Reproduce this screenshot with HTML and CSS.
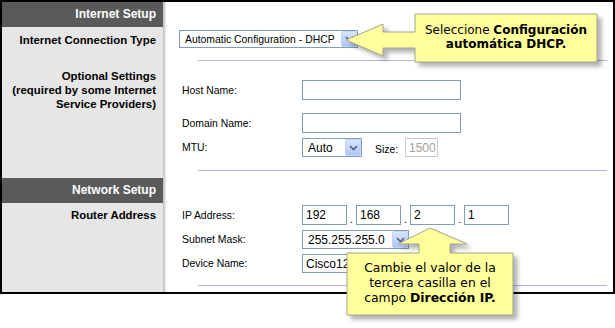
FILE: index.html
```html
<!DOCTYPE html>
<html>
<head>
<meta charset="utf-8">
<link rel="stylesheet" href="styles.css">
</head>
<body>
<div class="page">
  <div class="frame">
    <div class="side head">Internet Setup</div>
    <div class="main"></div>

    <div class="side lbl r1">Internet Connection Type</div>
    <div class="main r1">
      <div class="select sel-type"><span class="sel-text">Automatic Configuration - DHCP</span><span class="sel-btn"><svg viewBox="0 0 9 6" width="9" height="6"><path d="M1 1 L4.5 4.5 L8 1" fill="none" stroke="#4d6185" stroke-width="1.6"/></svg></span></div>
      <div class="rule rule1"></div>
    </div>

    <div class="side lbl r2">Optional Settings<br>(required by some Internet<br>Service Providers)</div>
    <div class="main r2">
      <div class="field f-host"><span class="flabel">Host Name:</span><span class="input w-long"></span></div>
      <div class="field f-domain"><span class="flabel">Domain Name:</span><span class="input w-long"></span></div>
      <div class="field f-mtu"><span class="flabel">MTU:</span>
        <div class="select sel-mtu"><span class="sel-text">Auto</span><span class="sel-btn"><svg viewBox="0 0 9 6" width="9" height="6"><path d="M1 1 L4.5 4.5 L8 1" fill="none" stroke="#4d6185" stroke-width="1.6"/></svg></span></div>
        <span class="size-lbl">Size:</span><span class="input w-size disabled">1500</span>
      </div>
      <div class="rule rule2"></div>
    </div>

    <div class="side head">Network Setup</div>
    <div class="main"></div>

    <div class="side lbl r3">Router Address</div>
    <div class="main r3">
      <div class="field f-ip"><span class="flabel">IP Address:</span>
        <span class="input w-oct">192</span><span class="dot">.</span><span class="input w-oct">168</span><span class="dot">.</span><span class="input w-oct">2</span><span class="dot">.</span><span class="input w-oct">1</span>
      </div>
      <div class="field f-mask"><span class="flabel">Subnet Mask:</span>
        <div class="select sel-mask"><span class="sel-text">255.255.255.0</span><span class="sel-btn"><svg viewBox="0 0 9 6" width="9" height="6"><path d="M1 1 L4.5 4.5 L8 1" fill="none" stroke="#4d6185" stroke-width="1.6"/></svg></span></div>
      </div>
      <div class="field f-dev"><span class="flabel">Device Name:</span><span class="input w-long">Cisco12345</span></div>
      <div class="rule rule3"></div>
    </div>
  </div>

  <div class="callout c1">
    <svg class="bubble" viewBox="340 8 270 62" width="270" height="62">
      <path d="M346 40 L383 24 L383 32 L415 32 L415 14 L597 14 L597 62 L415 62 L415 48 L383 48 L383 56 Z" fill="#ffff9c" stroke="#a4a48c" stroke-width="1"/>
    </svg>
    <div class="ctext t1">Seleccione <b>Configuración</b><br><b>automática DHCP.</b></div>
  </div>

  <div class="callout c2">
    <svg class="bubble" viewBox="340 222 180 100" width="180" height="100">
      <path d="M430 228 L467 244 L450 244 L450 253 L513 253 L513 315 L347 315 L347 253 L419 253 L419 244 L398 244 Z" fill="#ffff9c" stroke="#a4a48c" stroke-width="1"/>
    </svg>
    <div class="ctext t2">Cambie el valor de la<br>tercera casilla en el<br>campo <b>Dirección IP.</b></div>
  </div>
</div>
</body>
</html>
```
FILE: styles.css
```css
html, body {
  margin: 0;
  padding: 0;
  background: #fff;
}
.page {
  position: relative;
  width: 615px;
  height: 328px;
}
.frame {
  box-sizing: border-box;
  width: 615px;
  height: 294px;
  border: 2px solid #000;
  display: grid;
  grid-template-columns: 161px 1fr;
  grid-template-rows: 25px 39px 112px 25px 1fr;
  font-family: "Liberation Sans", Arial, sans-serif;
  color: #000;
}
.side {
  background: #e6e6e6;
  text-align: right;
  padding-right: 7px;
}
.side.head {
  background: #5a5a5a;
  color: #fff;
  font-weight: bold;
  font-size: 12px;
  line-height: 25px;
}
.lbl {
  font-weight: bold;
  font-size: 11.4px;
  line-height: 14px;
}
.side.r1 { padding-top: 6px; }
.side.r2 { padding-top: 3px; }
.side.r3 { padding-top: 5px; }
.main {
  background: linear-gradient(90deg, #bdbdbd 0, #dcdcdc 2px, #f4f4f4 3px, #fff 4px);
  display: flex;
  flex-direction: column;
  padding-left: 19px;
  font-size: 10.4px;
}
.main.r1 { padding-top: 3px; }
.main.r2 { padding-top: 14px; }
.main.r3 { padding-top: 2px; }
.rule {
  height: 1px;
  background: #b4b4e4;
  margin-left: 16px;
  margin-right: 6px;
}
.rule1 { margin-top: 12px; }
.rule2 { margin-top: 13px; }
.rule3 { margin-top: 12px; }

.field {
  display: flex;
  align-items: center;
  height: 20px;
}
.f-domain { margin-top: 13px; }
.f-mtu { margin-top: 5px; height: 19px; }
.f-mask { margin-top: 5px; height: 19px; }
.f-dev { margin-top: 5px; height: 19px; }
.flabel {
  width: 120px;
  flex: none;
}
.input {
  box-sizing: border-box;
  height: 100%;
  border: 1px solid #7f9db9;
  background: #fff;
  font-size: 12px;
  padding-left: 3px;
  display: flex;
  align-items: center;
  overflow: hidden;
  white-space: nowrap;
}
.w-long { width: 159px; }
.w-size { width: 33px; }
.w-oct { width: 45px; }
.disabled { color: #a0a0a0; border-color: #c9c9c9; }
.dot {
  width: 9px;
  text-align: center;
  align-self: flex-end;
  font-size: 11px;
  line-height: 12px;
}
.size-lbl {
  margin-left: 13px;
  width: 30px;
  padding-top: 4px;
}
.select {
  box-sizing: border-box;
  border: 1px solid #7f9db9;
  background: #fff;
  display: flex;
  align-items: center;
  justify-content: space-between;
  height: 19px;
  font-size: 10.4px;
}
.sel-type { width: 179px; height: 18px; }
.sel-mtu { width: 60px; }
.sel-mask { width: 107px; }
.sel-text {
  padding-left: 5px;
  font-size: 12px;
  white-space: nowrap;
}
.sel-type .sel-text { font-size: 10.4px; }
.sel-btn {
  box-sizing: border-box;
  width: 16px;
  height: 100%;
  border: 1px solid #c3d3fd;
  border-radius: 2px;
  background: linear-gradient(180deg, #d9e4fc 0%, #c0d1f8 60%, #b2c6f4 100%);
  display: flex;
  align-items: center;
  justify-content: center;
}
.main.r1 .select { margin-left: -3px; }

.callout {
  position: absolute;
  font-family: "DejaVu Sans", Verdana, sans-serif;
  color: #000;
}
.bubble {
  position: absolute;
  left: 0;
  top: 0;
  filter: drop-shadow(4px 4px 2px rgba(0, 0, 0, 0.3));
  overflow: visible;
}
.c1 { left: 340px; top: 8px; width: 270px; height: 62px; }
.c2 { left: 340px; top: 222px; width: 180px; height: 100px; }
.ctext {
  position: absolute;
  text-align: center;
  white-space: nowrap;
}
.t1 {
  left: 75px;
  top: 15px;
  width: 182px;
  font-size: 12px;
  line-height: 14px;
}
.t2 {
  left: 7px;
  top: 38px;
  width: 166px;
  font-size: 12.4px;
  line-height: 15px;
}
```
